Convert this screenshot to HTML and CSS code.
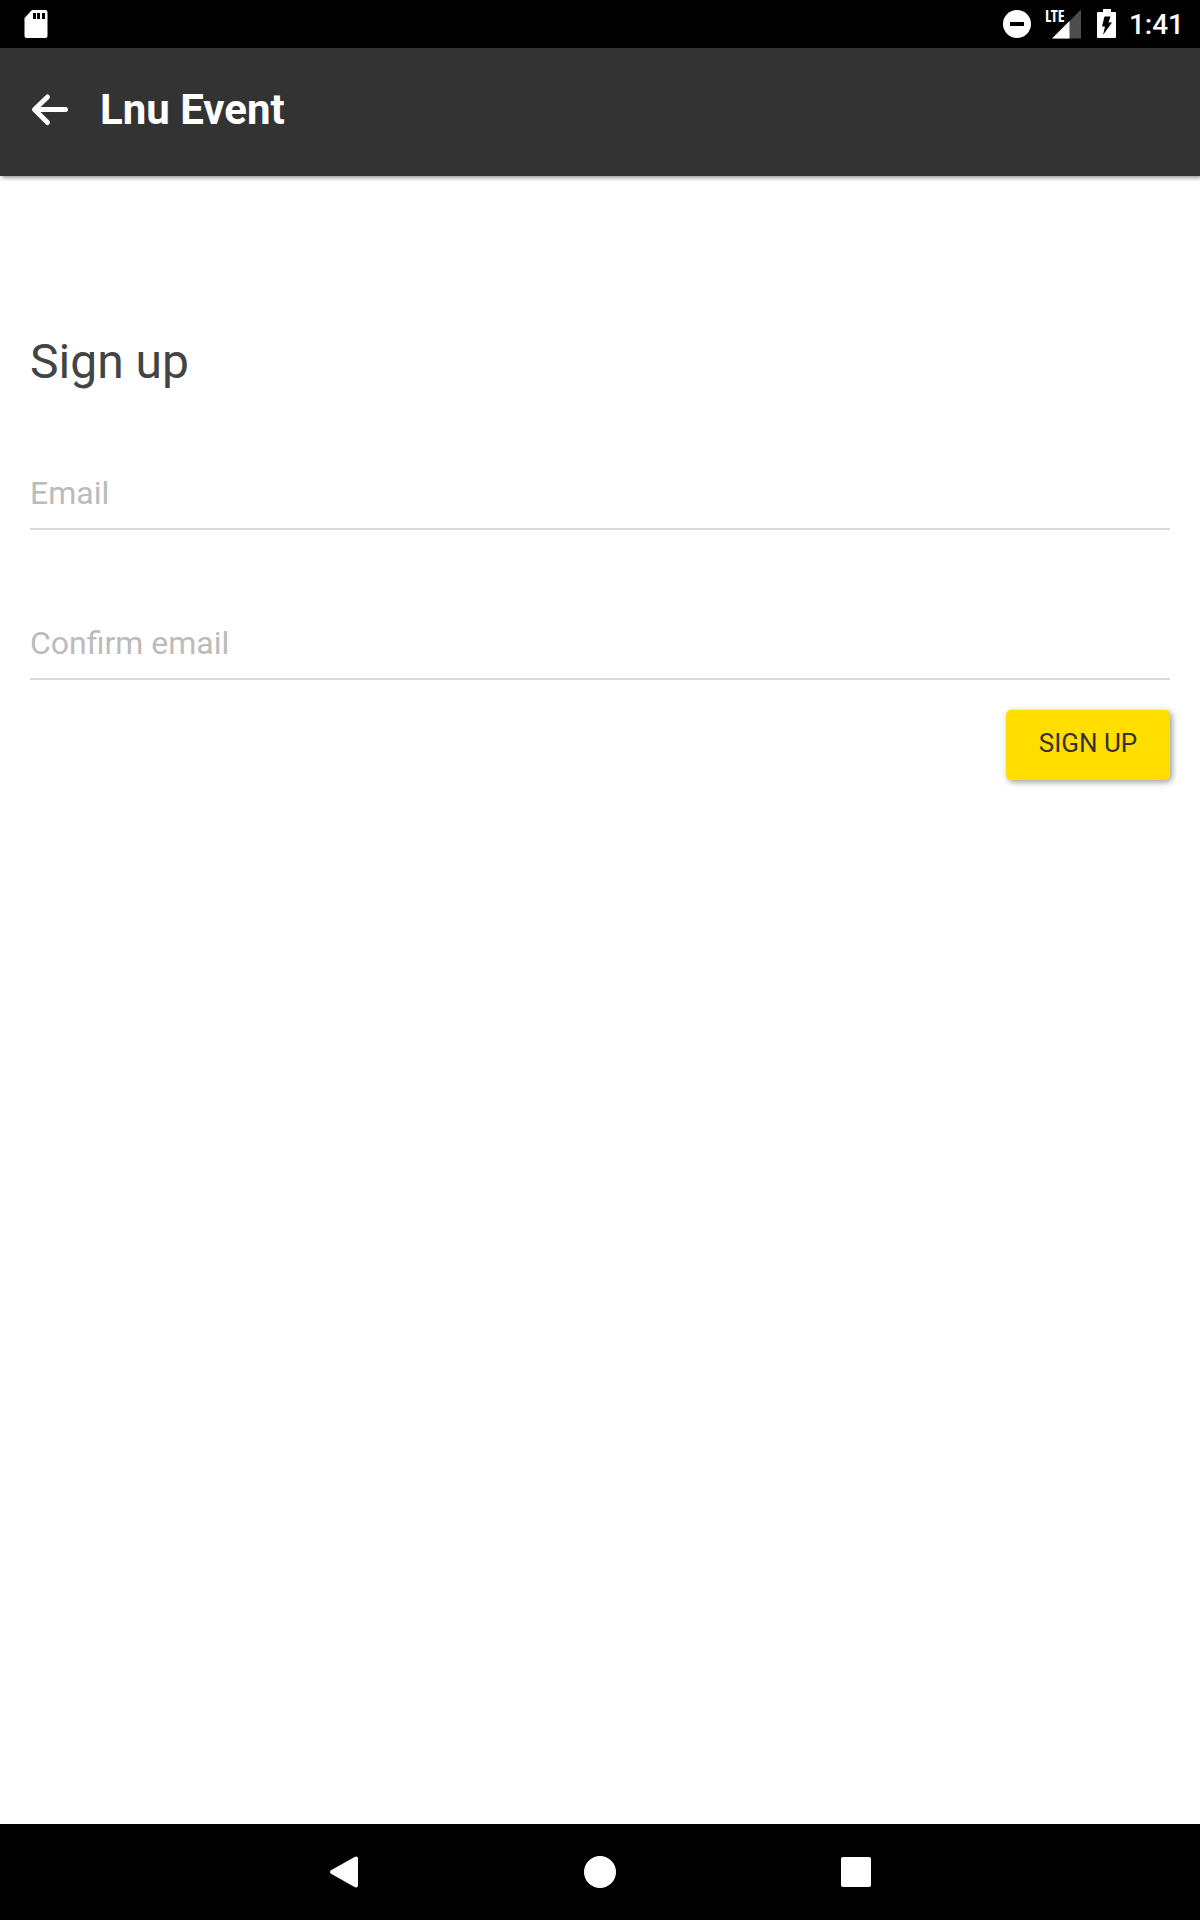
FILE: index.html
```html
<!DOCTYPE html>
<html lang="en">
<head>
<meta charset="utf-8">
<meta name="viewport" content="width=device-width, initial-scale=1">
<title>Lnu Event</title>
<link rel="stylesheet" href="styles.css">
</head>
<body>
<div class="status-bar">
  <svg class="status-icon" viewBox="0 0 32 32" aria-hidden="true">
    <path fill="#fff" fill-rule="evenodd" d="M12 2h13.500q2 0 2 2v24q0 2-2 2h-19q-2 0-2-2V10zM13 5v6h3V5zm4 0v6h3V5zm5 0v6h3V5z"/>
  </svg>
  <div class="status-group">
    <svg class="status-icon" viewBox="0 0 32 32" aria-hidden="true">
      <circle cx="16" cy="16" r="14" fill="#fff"/>
      <path fill="#000" d="M9 14h14v4H9z"/>
    </svg>
    <div class="signal">
      <svg class="signal-icon" viewBox="0 0 36 32" aria-hidden="true">
        <path fill="#4d4d4d" d="M36 1.500V30.500H7z"/>
        <path fill="#fff" d="M24.500 13V30.500H7z"/>
      </svg>
      <span class="signal-label">LTE</span>
    </div>
    <svg class="battery-icon" viewBox="0 0 20 32" aria-hidden="true">
      <path fill="#fff" d="M6 1h8v3h4q1 0 1 1v24q0 1-1 1H1q-1 0-1-1V5q0-1 1-1h5z"/>
      <path fill="#000" d="M7.500 8.500h6l-2 6H15L6 27l2-8.500H5z"/>
    </svg>
    <span class="clock">1:41</span>
  </div>
</div>
<header class="app-bar">
  <button class="back" type="button" aria-label="Back">
    <svg class="back-icon" viewBox="0 0 40 36" fill="none" stroke="#fff" stroke-width="5" stroke-linecap="round" stroke-linejoin="round" aria-hidden="true">
      <path d="M35.500 17.500H5.500M17.500 5L4.500 17.500L17.500 30.500"/>
    </svg>
  </button>
  <h1 class="app-title">Lnu Event</h1>
</header>
<main class="content">
  <form class="form">
    <h2 class="heading">Sign up</h2>
    <input class="field" type="email" aria-label="Email" placeholder="Email">
    <input class="field" type="email" aria-label="Confirm email" placeholder="Confirm email">
    <button class="submit" type="button">SIGN UP</button>
  </form>
</main>
<nav class="nav-bar">
  <button class="nav-button" type="button" aria-label="Back">
    <svg class="nav-icon" viewBox="0 0 36 36" aria-hidden="true"><path fill="#fff" stroke="#fff" stroke-width="4" stroke-linejoin="round" d="M30 4.500v27L6 18z"/></svg>
  </button>
  <button class="nav-button" type="button" aria-label="Home">
    <svg class="nav-icon" viewBox="0 0 36 36" aria-hidden="true"><circle cx="18" cy="18" r="16" fill="#fff"/></svg>
  </button>
  <button class="nav-button" type="button" aria-label="Recent apps">
    <svg class="nav-icon" viewBox="0 0 36 36" aria-hidden="true"><rect x="3" y="3" width="30" height="30" rx="2" fill="#fff"/></svg>
  </button>
</nav>
</body>
</html>
```
FILE: styles.css
```css
* {
  box-sizing: border-box;
}

body {
  margin: 0;
  min-height: 100vh;
  display: flex;
  flex-direction: column;
  background: #fff;
  font-family: Roboto, "Liberation Sans", sans-serif;
}

svg {
  display: block;
}

button {
  margin: 0;
  border: 0;
  background: none;
  font-family: inherit;
}

.status-bar {
  display: flex;
  justify-content: space-between;
  align-items: center;
  height: 48px;
  padding: 0 16px 0 20px;
  background: #000;
}

.status-group {
  display: flex;
  align-items: center;
  gap: 12px;
}

.status-icon {
  width: 32px;
  height: 32px;
}

.signal {
  position: relative;
}

.signal-icon {
  width: 36px;
  height: 32px;
}

.signal-label {
  position: absolute;
  top: 0;
  left: 0;
  color: #fff;
  font: 700 16px/16px "Open Sans Condensed", "Roboto Condensed", Roboto, sans-serif;
}

.battery-icon {
  width: 20px;
  height: 32px;
  margin-left: 4px;
}

.clock {
  padding-top: 2px;
  color: #fff;
  font-size: 28px;
  line-height: 32px;
  font-weight: 500;
}

.app-bar {
  position: relative;
  display: flex;
  align-items: center;
  gap: 30px;
  height: 128px;
  padding: 0 30px 4px;
  background: #333;
  box-shadow: 2px 2px 4px rgba(0, 0, 0, 0.4);
}

.back {
  padding: 0;
}

.back-icon {
  width: 40px;
  height: 36px;
}

.app-title {
  margin: 0;
  color: #fff;
  font-size: 42px;
  line-height: 48px;
  font-weight: 700;
}

.content {
  flex: 1;
  padding: 154px 30px 30px;
}

.form {
  display: flex;
  flex-direction: column;
}

.heading {
  margin: 0 0 74px;
  color: #444;
  font-size: 48px;
  line-height: 64px;
  font-weight: 400;
}

.field {
  width: 100%;
  height: 62px;
  margin: 0 0 88px;
  padding: 0 0 10px;
  border: 0;
  border-bottom: 2px solid #dcdcdc;
  border-radius: 0;
  background: none;
  color: #444;
  font: 400 32px/40px Roboto, "Liberation Sans", sans-serif;
  outline: 0;
}

.field::placeholder {
  color: #bbb;
  opacity: 1;
}

.field:last-of-type {
  margin-bottom: 30px;
}

.submit {
  align-self: flex-end;
  min-width: 164px;
  padding: 17px 32px 21px;
  border-radius: 5px;
  background: #ffde00;
  box-shadow: 2px 2px 6px rgba(0, 0, 0, 0.4);
  color: #333;
  font-size: 26px;
  line-height: 32px;
}

.nav-bar {
  display: flex;
  justify-content: center;
  height: 96px;
  background: #000;
}

.nav-button {
  display: flex;
  align-items: center;
  justify-content: center;
  width: 256px;
}

.nav-icon {
  width: 36px;
  height: 36px;
}
```
